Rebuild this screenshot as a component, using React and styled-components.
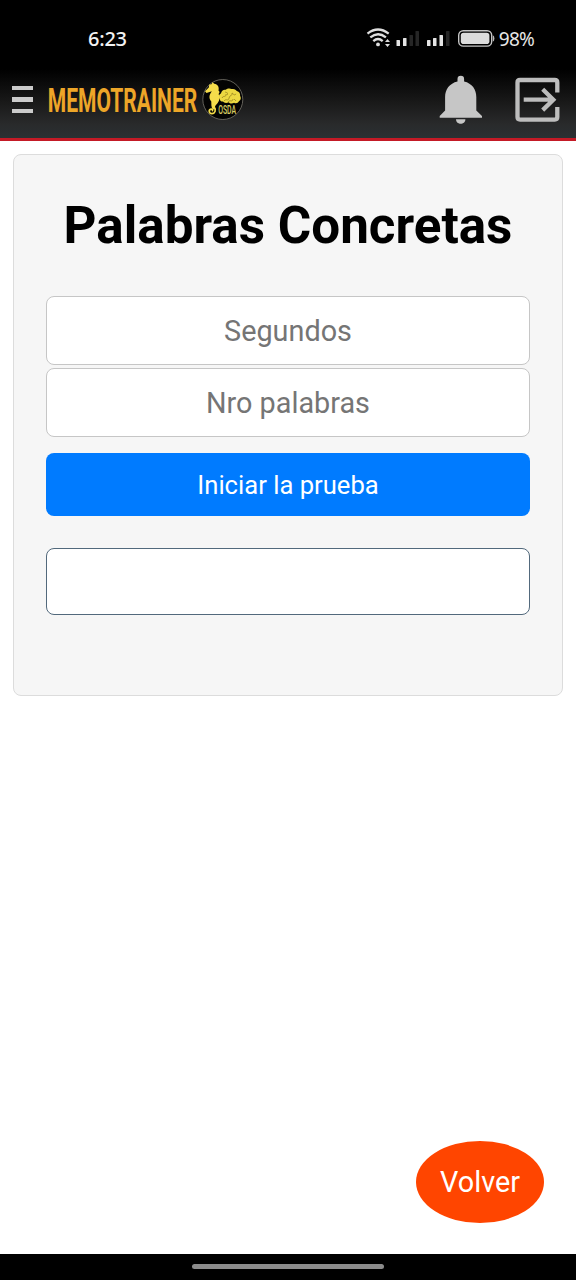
import React from "react";
import styled, { createGlobalStyle } from "styled-components";

const Global = createGlobalStyle`
  *, *::before, *::after { box-sizing: border-box; }
  body { margin: 0; background: #fff; font-family: Roboto, "Liberation Sans", sans-serif; }
`;

const Screen = styled.div`
  width: 576px;
  height: 1280px;
  display: flex;
  flex-direction: column;
  background: #fff;
  overflow: hidden;
`;

const StatusBar = styled.div`
  height: 69px;
  flex: none;
  display: flex;
  justify-content: space-between;
  padding: 26px 42px 0 88px;
  background: #000;
  color: #e6e6e6;
  font: 500 20px/26px "Noto Sans", sans-serif;
`;

const Clock = styled.span`
  letter-spacing: -0.25px;
  color: #f2f2f2;
`;

const StatusIcons = styled.div`
  display: flex;
  gap: 3px;
  svg { display: block; }
`;

const Percent = styled.span`
  font-size: 19px;
  letter-spacing: -0.8px;
  font-weight: 400;
`;

const Header = styled.header`
  height: 72.3px;
  flex: none;
  display: flex;
  align-items: flex-start;
  background: linear-gradient(#000, #191919 48%, #292a2b 80%, #2a3033);
  border-bottom: 3px solid #c41a26;
  padding: 8px 16px 0 12px;
`;

const MenuButton = styled.div`
  display: flex;
  flex-direction: column;
  gap: 7.3px;
  width: 21px;
  margin: 9px 13px 0 0;
`;

const MenuLine = styled.span`
  height: 4.2px;
  background: #cbcbcb;
`;

const Brand = styled.svg`
  display: block;
  width: 202px;
  height: 46px;
`;

const Actions = styled.div`
  display: flex;
  gap: 31px;
  margin-left: auto;
  margin-top: -2px;
`;

const ActionIcon = styled.svg`
  display: block;
  width: ${(p) => p.$w}px;
  height: 50px;
`;

const Main = styled.main`
  flex: 1;
  display: flex;
  flex-direction: column;
  padding: 13px 13px 31px;
`;

const Card = styled.section`
  height: 542px;
  display: flex;
  flex-direction: column;
  padding: 0 32px;
  border: 1.6px solid #dcdcdc;
  border-radius: 8px;
  background: #f6f6f6;
`;

const Title = styled.h1`
  margin: 41px 0 39.9px;
  font-size: 51.2px;
  line-height: 60px;
  font-weight: 700;
  text-align: center;
  white-space: nowrap;
  color: #000;
`;

const Field = styled.input`
  display: block;
  width: 100%;
  height: 69px;
  margin: 0 0 3px;
  padding: 0 16px;
  border: 1.6px solid #c6c6c6;
  border-radius: 8px;
  background: #fff;
  font: 400 28.8px Roboto, sans-serif;
  text-align: center;
  outline: none;
  &::placeholder { color: #757575; opacity: 1; }
`;

const StartButton = styled.button`
  height: 63px;
  margin: 13px 0 32px;
  padding: 0;
  border: 0;
  border-radius: 8px;
  background: #007bff;
  color: #fff;
  font: 400 25.6px Roboto, sans-serif;
`;

const WordBox = styled.div`
  height: 67px;
  border: 1.6px solid #52697c;
  border-radius: 8px;
  background: #fff;
`;

const BackButton = styled.button`
  align-self: flex-end;
  width: 128px;
  height: 82px;
  margin: auto 19px 0 0;
  border: 0;
  border-radius: 50%;
  background: #ff4500;
  color: #fff;
  font: 400 28.8px Roboto, sans-serif;
`;

const NavBar = styled.div`
  height: 26px;
  flex: none;
  display: flex;
  justify-content: center;
  padding-top: 10px;
  background: #000;
`;

const NavHandle = styled.span`
  width: 192px;
  height: 5px;
  border-radius: 3px;
  background: #8b8b8b;
`;

function Indicators() {
  return (
    <svg width="130" height="26" viewBox="366 26 130 26" fill="none">
      <g stroke="#dedede" strokeWidth="2.3">
        <path d="M367.5 33.600Q378 25.500 388.700 33.600" />
        <path d="M370.300 37.400Q378 31 385.900 37.400" />
        <path d="M373.300 41.100Q378 37 382.700 41.100" />
      </g>
      <circle cx="378" cy="44.4" r="1.9" fill="#dedede" />
      <path d="M385 42l2.5-3 2.5 3zM385 44l2.5 3 2.5-3z" fill="#dedede" />
      <g fill="#e4e4e4">
        <rect x="396.500" y="40" width="3.5" height="6" rx=".6" />
        <rect x="403" y="38" width="3.5" height="8" rx=".6" />
        <rect x="427" y="40" width="3.5" height="6" rx=".6" />
        <rect x="433" y="38" width="3.5" height="8" rx=".6" />
        <rect x="439.5" y="35" width="3.5" height="11" rx=".6" />
      </g>
      <g fill="#262626">
        <rect x="409.500" y="35" width="3.5" height="11" rx=".6" />
        <rect x="415.5" y="31" width="3.5" height="15" rx=".6" />
        <rect x="446" y="31" width="3.5" height="15" rx=".6" />
      </g>
      <rect x="458.7" y="30.7" width="33" height="15.4" rx="4.6" stroke="#c4c4c4" strokeWidth="1.4" />
      <rect x="460.8" y="32.7" width="28.6" height="11.4" rx="2.8" fill="#dcdcdc" />
      <path d="M492.8 35.3q1.6.6 1.6 3.1t-1.6 3.1z" fill="#b8b8b8" />
    </svg>
  );
}

function Logo() {
  return (
    <Brand viewBox="46 77 202 46">
      <text
        transform="translate(47.8 112) scale(.62 1)"
        textLength="241" lengthAdjust="spacingAndGlyphs"
        fontFamily="Roboto, sans-serif" fontWeight="700" fontSize="33.5" fill="#eda628"
      >MEMOTRAINER</text>
      <circle cx="222.8" cy="99.5" r="20" fill="#030303" stroke="#77756c" strokeWidth=".8" />
      <path
        d="M209.3 84.6L211.5 84.2 212.6 82.3 214.2 83.7C217.8 84.3 219.4 87 218.5 90.6L219.6 92 218.6 94C220.3 98 219.3 101.6 216.6 104.3C214.8 106 214.5 107.3 215.6 109.3L212.8 109.6C211 106.8 211.4 104.2 211.3 101.5C208.6 98.5 209 95 211.8 91.3L206.5 92.9 205 91.3 208.8 87.5z"
        fill="#f5dd4b"
      />
      <path d="M214.2 107c2.3 3.1.7 6.6-2.3 6.7-2.9 0-3.7-4-.9-4.600 1.5-.2 2 1.2 1 2" fill="none" stroke="#f3dc48" strokeWidth="1.7" />
      <g transform="translate(-.9 0)">
        <path d="M220.6 99c-1.8-2.3-.5-4.8 1.3-5.5.3-2.9 2.7-4.2 4.7-3.7 1.7-1.7 4.6-1.6 5.9-.7 2.5-.7 4.6.6 5.2 2 2.6.4 3.6 2.8 3.3 4.7 1.4 2.2.7 4.7-1.2 5.5-.8 2.1-3.3 2.4-4.8 1.4-2 1.3-4.5.8-5.4-.5-2.3 1.5-4.8.7-5.7-.6-1.5.2-3.2-.9-3.3-2.6z" fill="#ecd841" />
        <path d="M223 98c1-3 4 0 4-4m-2 7c2-3 4 1 5-3s3-1 3-5m-4 9c2-3 4 1 5-3m-1-6c2 1 1 3 4 1m-2 5l2 2m-11-9c2 1 3 0 2 3" fill="none" stroke="#95821f" strokeWidth=".8" />
      </g>
      <text
        transform="translate(218.2 114) scale(.56 1)"
        textLength="32" lengthAdjust="spacingAndGlyphs"
        fontFamily="Roboto, sans-serif" fontSize="12.3" fontWeight="500" fill="#d8cc62"
      >OSDA</text>
    </Brand>
  );
}

export default function App() {
  return (
    <>
      <Global />
      <Screen>
        <StatusBar>
          <Clock>6:23</Clock>
          <StatusIcons>
            <Indicators />
            <Percent>98%</Percent>
          </StatusIcons>
        </StatusBar>
        <Header>
          <MenuButton role="button" aria-label="Menú">
            <MenuLine />
            <MenuLine />
            <MenuLine />
          </MenuButton>
          <Logo />
          <Actions>
            <ActionIcon $w={44} viewBox="439 75 44 50" fill="#c6c6c6">
              <path d="M457.5 81.5V79a3.3 3.3 0 0 1 6.6 0v2.5c8 1.8 12.2 8 12.2 15.5v13.5l5.7 5.5v1.7h-42.3V116l5.4-5.5V97c0-7.5 4.4-13.7 12.4-15.5z" />
              <path d="M456 119.3h9.4c0 6-9.4 6-9.4 0z" />
            </ActionIcon>
            <ActionIcon $w={46} viewBox="514 75 46 50" fill="none" stroke="#bdbdbd" strokeWidth="4.3">
              <path d="M557.3 92.5V82.5q0-2.5-2.5-2.5H520q-2.5 0-2.5 2.5v34.6q0 2.5 2.5 2.5h34.8q2.5 0 2.5-2.5v-10" />
              <path d="M523.7 99.7h30M542.7 89.3l10.6 10.4-10.6 10.4" />
            </ActionIcon>
          </Actions>
        </Header>
        <Main>
          <Card>
            <Title>Palabras Concretas</Title>
            <Field placeholder="Segundos" />
            <Field placeholder="Nro palabras" />
            <StartButton>Iniciar la prueba</StartButton>
            <WordBox />
          </Card>
          <BackButton>Volver</BackButton>
        </Main>
        <NavBar>
          <NavHandle />
        </NavBar>
      </Screen>
    </>
  );
}
